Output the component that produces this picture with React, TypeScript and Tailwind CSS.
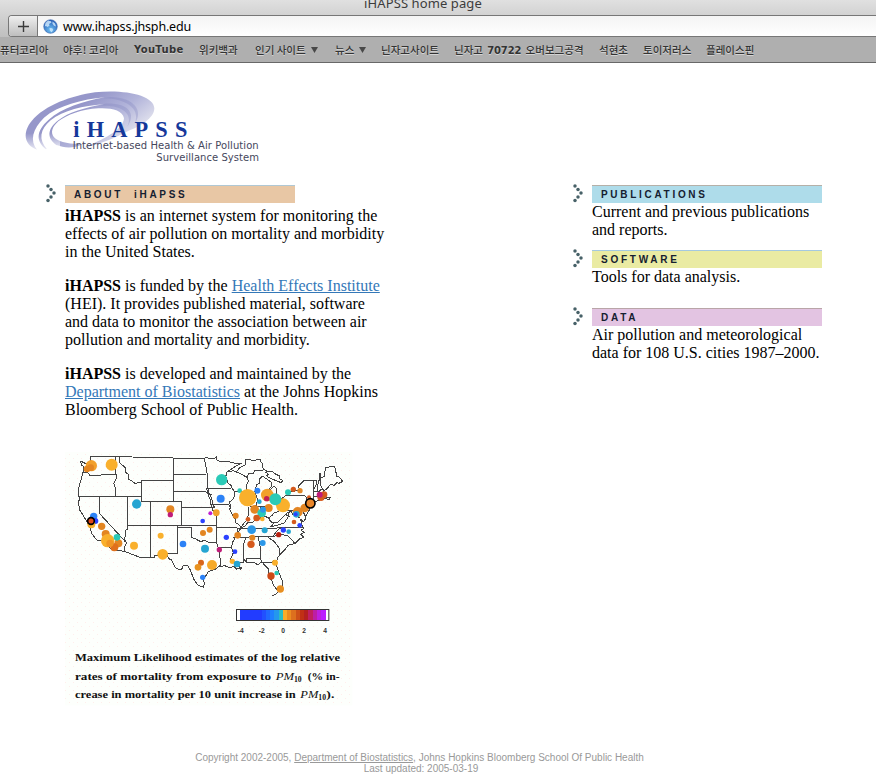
import React from "react";

const SANS = "font-['Liberation_Sans',sans-serif]";

const bookmarks = [
  { label: "퓨터코리아", box: "w-[63px]" },
  { label: "야후! 코리아", box: "w-[71px]", space: "tracking-[0.2px]" },
  { label: "YouTube", box: "w-[65px]", latin: true },
  { label: "위키백과", box: "w-[56px]" },
  { label: "인기 사이트", box: "w-[80px]", menu: true },
  { label: "뉴스", box: "w-[46px]", menu: true },
  { label: "닌자고사이트", box: "w-[73px]" },
  { label: "닌자고 70722 오버보그공격", box: "w-[145px]", space: "[word-spacing:1.8px]", digits: true },
  { label: "석현초", box: "w-[44px]" },
  { label: "토이저러스", box: "w-[63px]" },
  { label: "플레이스핀", box: "w-[60px]" },
];

function Browser() {
  return (
    <header className="flex h-[63px] flex-col overflow-hidden border-b border-[#686868] bg-linear-to-b from-[#e0e0e0] via-[#c4c4c4] to-[#acacac] text-[#333]">
      <div className="flex h-[15px] items-end justify-center pr-[30px] font-['Noto_Sans','Open_Sans',sans-serif] text-[13px] leading-[22px] tracking-[0.1px] text-[#3c3c3c]">
        <span className="relative -top-px h-[22px] whitespace-nowrap">iHAPSS home page</span>
      </div>
      <div className="ml-2 flex h-[22px] shrink-0 rounded-l-[4px] border border-r-0 border-[#777] bg-linear-to-b from-[#f4f4f4] to-white">
        <div className="flex w-[29px] items-center justify-center rounded-l-[3px] border-r border-[#777] bg-linear-to-b from-[#efefef] to-[#bebebe]">
          <svg width="11" height="11" viewBox="0 0 11 11"><path d="M5.5 0v11M0 5.5h11" stroke="#3a3a3a" strokeWidth="1.4" /></svg>
        </div>
        <svg className="mt-[3px] ml-[5px]" width="15" height="15" viewBox="0 0 15 15">
          <defs>
            <radialGradient id="globe" cx="50%" cy="75%" r="70%"><stop offset="0" stopColor="#6fc0f2" /><stop offset="1" stopColor="#2a60b8" /></radialGradient>
          </defs>
          <circle cx="7.5" cy="7.5" r="6.8" fill="url(#globe)" stroke="#3b68ae" strokeWidth=".6" />
          <path d="M2.5 4 5 1.6 8 2.2 8.5 3.6 6 5 6.6 6.6 4.6 8 3 7 1.8 7.5ZM9.5 2.4l2.5 2 1 3-2-.6-1.5-2ZM6.5 9l2.8.2 1 1.8-1.8 2.5-1.6-2Z" fill="#d4ecff" opacity=".8" />
        </svg>
        <span className="ml-[5px] font-['Noto_Sans','Open_Sans',sans-serif] text-[12.5px] leading-[22px] tracking-[-0.17px] text-black">www.ihapss.jhsph.edu</span>
      </div>
      <nav className="flex h-[25px] shrink-0 items-center bg-[#afafaf] pt-px font-['Noto_Sans_CJK_KR',sans-serif] text-[10.5px] leading-[20px] font-medium whitespace-nowrap [text-shadow:0_1px_0_#d4d4d4]">
        {bookmarks.map((b) => (
          <span key={b.label} className={`flex shrink-0 items-center ${b.box} ${b.space ?? ""} ${b.latin ? "font-['DejaVu_Sans',sans-serif] text-[10px] font-bold tracking-[0.35px]" : ""}`}>
            {b.digits ? <span>닌자고 <span className="font-['DejaVu_Sans',sans-serif] text-[10px] font-bold tracking-[-0.1px]">70722</span> 오버보그공격</span> : b.label}
            {b.menu && <svg className="-mt-px ml-[5px]" width="7" height="6" viewBox="0 0 7 6"><path d="M0 0h7L3.5 6Z" fill="#484848" /></svg>}
          </span>
        ))}
      </nav>
    </header>
  );
}

function Logo() {
  return (
    <svg className="mt-[17px] ml-[15px] block" width="260" height="90" viewBox="0 0 780 270">
      <defs>
        <linearGradient id="wing" gradientUnits="userSpaceOnUse" x1="240" y1="20" x2="350" y2="165">
          <stop offset="0" stopColor="#9697ca" /><stop offset=".45" stopColor="#b2b4da" /><stop offset="1" stopColor="#ececf2" />
        </linearGradient>
        <linearGradient id="tail" x1="0" y1="0" x2="0" y2="1">
          <stop offset="0" stopColor="#fff" stopOpacity="0" /><stop offset="1" stopColor="#fff" stopOpacity=".8" />
        </linearGradient>
      </defs>
      <g transform="translate(15 15)">
        <path d="M52 194C10 180 8 140 35 108C75 60 155 32 225 22C310 12 403 30 403 70C403 100 360 125 320 140C285 158 245 176 190 188C245 166 310 135 312 100C308 76 275 68 235 70C185 72 140 90 115 109C75 145 98 180 190 177C160 192 130 188 112 181L82 192Z" fill="url(#wing)" />
        <path d="M250 40C315 41 362 68 345 115C370 80 345 36 270 36Z" fill="#7e80be" opacity=".3" />
        <path d="M240 63C300 58 342 85 322 125C350 85 325 53 255 56Z" fill="#7e80be" opacity=".3" />
        <path d="M52 196C28 166 38 132 72 98C115 62 185 43 255 37C190 48 125 70 86 104C46 139 48 170 80 194Z" fill="#fff" />
        <path d="M82 194C54 164 60 133 92 106C130 76 190 62 250 58C195 68 145 82 115 106C82 131 78 160 112 182L110 196Z" fill="#fff" />
        <path d="M10 145H120V196H10Z" fill="url(#tail)" />
      </g>
      <text x="175" y="170" textLength="342" fontFamily="'Liberation Serif',serif" fontSize="67" fontWeight="700" fill="#15389a">iHAPSS</text>
      <text x="173" y="207" textLength="558" fontFamily="'DejaVu Sans',sans-serif" fontSize="30" fill="#45475c">Internet-based Health &amp; Air Pollution</text>
      <text x="424" y="243" textLength="308" fontFamily="'DejaVu Sans',sans-serif" fontSize="30" fill="#45475c">Surveillance System</text>
    </svg>
  );
}

function Arrow() {
  const dots = [[3, 2], [6, 5.5], [9, 9], [6, 13], [3, 16.5]];
  return (
    <svg className="-mt-px mr-[9px] shrink-0" width="11" height="19" viewBox="0 0 11 19">
      {dots.map(([x, y]) => <circle key={y} cx={x} cy={y} r="1.75" fill="#476168" />)}
    </svg>
  );
}

function Section({ title, bar, space, children }: { title: string; bar: string; space: string; children: React.ReactNode }) {
  return (
    <section className="flex">
      <Arrow />
      <div>
        <h2 className={`h-[18px] w-[230px] border-t pl-[9px] text-[10px] leading-[18px] font-bold whitespace-pre text-[#152030] ${SANS} ${space} ${bar}`}>{title}</h2>
        {children}
      </div>
    </section>
  );
}

type Dot = [number, number, number, string];
const A = "#f9b02c", O = "#e38622", R = "#d55a1c", T = "#2acab6", C = "#25a5d2", B = "#2b82f6", D = "#2b42ff", M = "#c01c78";
const westDots: Dot[] = [
  [79, 47, 17, "#f2a02a"], [66, 57, 10, O], [77, 53, 10, O], [140, 44, 18, A], [215, 162, 14, C], [316, 178, 12, O], [316, 194, 8, M],
  [413, 213, 7, D], [436, 190, 6, "#c020d0"], [454, 188, 10, "#f2a02a"], [86, 199, 11, B], [91, 213, 9, D], [79, 223, 12, A],
  [110, 229, 11, O], [122, 252, 12, O], [128, 272, 20, A], [160, 280, 12, O], [148, 292, 12, "#e0701c"], [135, 280, 11, "#f09625"], [156, 262, 10, T],
  [207, 287, 12, A], [287, 257, 9, A], [293, 313, 16, A], [354, 282, 10, B], [414, 249, 9, O], [434, 239, 9, O], [420, 296, 12, C],
  [408, 338, 9, "#d9661a"], [399, 352, 10, "#e8921f"], [441, 345, 15, "#f6aa29"], [413, 382, 8, B],
];
const eastDots: Dot[] = [
  [50, 89, 17, T], [47, 146, 12, B], [104, 122, 7, T], [157, 122, 9, B], [128, 143, 26, A], [187, 135, 19, "#f2a02a"], [234, 166, 21, A],
  [211, 148, 18, T], [185, 146, 8, "#c42050"], [163, 155, 7, C], [149, 178, 13, O], [191, 174, 12, O], [170, 189, 13, T], [174, 179, 9, "#2b98e8"],
  [92, 197, 9, O], [129, 208, 7, R], [155, 204, 10, R], [172, 207, 7, A], [140, 239, 13, "#2b98e8"], [179, 241, 9, C], [98, 256, 10, O],
  [142, 263, 9, O], [138, 283, 11, R], [173, 279, 9, "#2b98e8"], [64, 262, 8, D], [43, 299, 8, M], [90, 305, 7, D], [82, 334, 8, A],
  [96, 342, 10, C], [210, 338, 9, A], [215, 369, 7, T], [198, 378, 11, "#cc4a16"], [249, 127, 9, T], [265, 118, 8, R], [285, 122, 8, O],
  [312, 142, 6, R], [348, 142, 11, R], [357, 134, 10, R], [344, 134, 9, M], [299, 174, 13, O], [278, 186, 15, O], [274, 193, 10, C],
  [272, 193, 6, D], [267, 216, 7, R], [284, 226, 7, D], [251, 245, 7, C], [235, 240, 8, D], [221, 254, 8, "#b82010"], [226, 417, 11, "#e88f20"],
];

const westLines =
  "M47 33 60 40 76 44 75 20H160L325 24H420M47 33 49 45 57 50 54 65 48 90 42 110 40 137 45 142 41 155 43 178 60 205 72 225 80 250 95 270 110 272 125 285 140 299 178 304" +
  "M55 66 68 68 75 76 100 77 115 73H152M152 22V70L156 80 146 100 150 110V140M42 140H228V155H350M163 22 165 40 180 52 183 68 192 75 190 88 200 92 210 100 230 97M230 155V91H325" +
  "M103 140V190L175 268 180 275M187 140V225H350V157M187 225V238L180 242 182 258 177 265 185 280 178 290 180 302M178 304 225 322H268V315H305L310 310H338M257 155V322M338 308V225H370" +
  "M350 225H452M325 24V157M325 73H423M325 124H420L430 130 440 134M418 24 422 45 427 73V110L432 118 430 127 440 145 444 165 450 174M352 173H450M338 233H380V263L392 267 405 274 420 272 435 278 452 276" +
  "M305 315 313 327 320 330 330 352 343 360 350 358 355 346 368 347 377 362 385 385 398 405 416 412 418 400 413 385 425 375 430 365 450 358 465 347";
const eastLines =
  "M0 23 28 26 34 20 36 30 50 36 70 35 90 40 110 40 90 50 66 66 62 80 66 90 68 98 82 110M66 66 85 62 94 66 105 52 120 46 121 30 135 28 140 32 165 28 166 35 173 40 171 50 177 58 170 63 150 60 143 72 132 70 126 82 110 73 94 66M177 58 187 65 200 63 213 73 224 78 225 87 233 91 229 98 213 92 194 84 185 78 190 72 180 66" +
  "M126 82 130 92 123 112 129 130 127 160 135 168 150 170 155 165 157 148 150 125 155 104 163 101 162 88 172 78 188 89 201 98 199 110 190 120 198 118 205 109 213 113 215 129 207 140 205 150M205 150 216 154 228 148 242 137 248 135M242 137H300L306 146 302 158 311 165 306 174" +
  "M5 115H78M78 110 90 127 86 145 73 157 78 169 74 178 83 197 91 207 91 217 104 226 107 235 99 248 95 256 83 276 79 292 85 308 77 327 78 336 98 336 101 350M88 125H126M5 115 8 130 16 150 18 162 24 182 35 192V233H96V247M15 163H70L75 169M33 233V260L37 290 42 292H79M42 292V320L48 330 45 350" +
  "M130 170V196L124 211 115 222 107 235M165 168V203M155 168H195M107 235 120 228 128 218 143 217 153 205 166 207 180 199 191 204 203 195 205 190 221 184 228 170 229 150M191 204 197 215 207 219 218 217 235 200 245 190 262 182M207 219 197 231M232 182H298M229 150V182M257 182 264 194 284 203M240 193 255 200M253 182 249 202 237 220 218 225 197 231" +
  "M96 234H217L297 233M84 261H133L203 260 220 238 228 233M123 262 117 280 116 336M160 262 168 302 167 326H125V336M203 260 225 253 248 257 270 280M190 262 208 275 223 295 225 315M250 138 250 127 275 122 283 117 281 108 298 91H333V106L326 119V146M325 91 327 110 324 124M345 70 342 92 338 107 336 122" +
  "M345 70 348 108 357 124M345 84 357 80 362 53 369 53 375 48 389 50 396 80 403 81 413 94 402 100 396 98 388 106 377 103 365 117 356 123 358 138 366 143 376 143 372 150 363 145 343 151 323 158M324 124H342L350 117M326 140H348M342 140V150M317 163 313 180 302 198 296 188 303 204 295 216 287 208 290 222 297 236 287 240 298 248 287 252 296 262 283 267 270 280 249 286 238 301 226 313 218 322 213 341 221 366 231 390 233 405 226 420 211 433 203 438" +
  "M167 326 170 336 202 339 206 330 214 333M45 350 59 347 73 353 87 350 95 358 110 351 107 359 100 346 92 344 105 338 116 337 117 327 124 338 144 336 158 344 171 336 183 350 192 359 191 379 201 392 206 407 218 421";

const scale = ["#223cff", "#223cff", "#223cff", "#223cff", "#223cff", "#2250ff", "#2168ff", "#1f80ff", "#2498ed", "#2bbcc4", "#f9ac28", "#ec8c20", "#dd701e", "#cd5018", "#c03015", "#b42020", "#c02060", "#bd1ea4", "#bd20df", "#bc20ff"];

function HealthMap() {
  return (
    <svg className="mt-[31px] block" width="290" height="258" viewBox="0 0 870 774">
      <defs>
        <pattern id="speckle" width="24" height="24" patternUnits="userSpaceOnUse">
          <rect width="24" height="24" fill="#fdfffc" /><rect width="3" height="3" fill="#ffeeec" /><rect x="12" y="12" width="3" height="3" fill="#ffeeec" />
        </pattern>
      </defs>
      <rect x="0" y="6" width="862" height="760" fill="url(#speckle)" />
      <g fill="none" stroke="#444" strokeWidth="3" strokeLinejoin="round" shapeRendering="crispEdges">
        <path d={westLines} />
        <path d={eastLines} transform="translate(420 0)" />
      </g>
      {westDots.map(([x, y, r, c], i) => <circle key={i} cx={x} cy={y} r={r} fill={c} />)}
      <g transform="translate(420 0)">
        {eastDots.map(([x, y, r, c], i) => <circle key={i} cx={x} cy={y} r={r} fill={c} />)}
        <circle cx="316" cy="160" r="14" fill="#e9872a" stroke="#000" strokeWidth="5" />
      </g>
      <circle cx="78" cy="213" r="10" fill="#e0491a" stroke="#000" strokeWidth="5" />
      <rect x="514.5" y="478.5" width="277" height="33" fill="#fff" stroke="#333" strokeWidth="3" />
      {scale.map((c, i) => <rect key={i} x={526 + i * 12.75} y="480" width="13.5" height="30" fill={c} shapeRendering="crispEdges" />)}
      <g fontFamily="'Liberation Sans',sans-serif" fontSize="20" fontWeight="700" fill="#333" textAnchor="middle">
        <text x="527" y="549">-4</text><text x="590" y="549">-2</text><text x="654" y="549">0</text><text x="717" y="549">2</text><text x="780" y="549">4</text>
      </g>
      <g fontFamily="'Liberation Serif',serif" fontSize="34" fontWeight="700" fill="#111">
        <text x="30" y="634" textLength="795" lengthAdjust="spacingAndGlyphs">Maximum Likelihood estimates of the log relative</text>
        <text x="30" y="690" textLength="588" lengthAdjust="spacingAndGlyphs">rates of mortality from exposure to</text>
        <text x="632" y="690" textLength="55" lengthAdjust="spacingAndGlyphs" fontStyle="italic" fontWeight="400">PM</text>
        <text x="687" y="695" fontSize="23" fontWeight="700">10</text>
        <text x="728" y="690" textLength="96" lengthAdjust="spacingAndGlyphs">(% in-</text>
        <text x="30" y="745" textLength="662" lengthAdjust="spacingAndGlyphs">crease in mortality per 10 unit increase in</text>
        <text x="706" y="745" textLength="54" lengthAdjust="spacingAndGlyphs" fontStyle="italic" fontWeight="400">PM</text>
        <text x="760" y="750" fontSize="23">10</text>
        <text x="784" y="745" textLength="24" lengthAdjust="spacingAndGlyphs">).</text>
      </g>
    </svg>
  );
}

export default function App() {
  const link = "text-[#3478b8] underline";
  return (
    <div className="h-[778px] w-[876px] overflow-hidden bg-white font-['Liberation_Serif',serif] text-[16px] leading-[18px] whitespace-nowrap text-black">
      <Browser />
      <Logo />
      <main className="mt-[15px] flex h-[567px] items-start pl-[45px]">
        <div className="w-[527px]">
          <Section title="ABOUT  iHAPSS" bar="border-[#b0c8d4] bg-[#e8c7a5]" space="tracking-[2.7px]">
            <p className="mt-1"><b>iHAPSS</b> is an internet system for monitoring the<br />effects of air pollution on mortality and morbidity<br />in the United States.</p>
            <p className="mt-4"><b>iHAPSS</b> is funded by the <a className={link}>Health Effects Institute</a><br />(HEI). It provides published material, software<br />and data to monitor the association between air<br />pollution and mortality and morbidity.</p>
            <p className="mt-4"><b>iHAPSS</b> is developed and maintained by the<br /><a className={link}>Department of Biostatistics</a> at the Johns Hopkins<br />Bloomberg School of Public Health.</p>
            <HealthMap />
          </Section>
        </div>
        <div className="flex flex-col">
          <Section title="PUBLICATIONS" bar="border-[#b5b0a8] bg-[#aedcea]" space="tracking-[2.7px]">
            <p>Current and previous publications<br />and reports.</p>
          </Section>
          <div className="mt-[11px]">
            <Section title="SOFTWARE" bar="border-[#a5c9e0] bg-[#eaeba3]" space="tracking-[2.75px]">
              <p>Tools for data analysis.</p>
            </Section>
          </div>
          <div className="mt-[22px]">
            <Section title="DATA" bar="border-[#b9a5a8] bg-[#e3c4e2]" space="tracking-[2.75px]">
              <p>Air pollution and meteorological<br />data for 108 U.S. cities 1987–2000.</p>
            </Section>
          </div>
        </div>
      </main>
      <footer className={`w-[839px] text-center text-[10px] leading-[11px] text-[#999] ${SANS}`}>
        Copyright 2002-2005, <a className="underline">Department of Biostatistics</a>, Johns Hopkins Bloomberg School Of Public Health<br />
        <span className="pl-[3px]">Last updated: 2005-03-19</span>
      </footer>
    </div>
  );
}
